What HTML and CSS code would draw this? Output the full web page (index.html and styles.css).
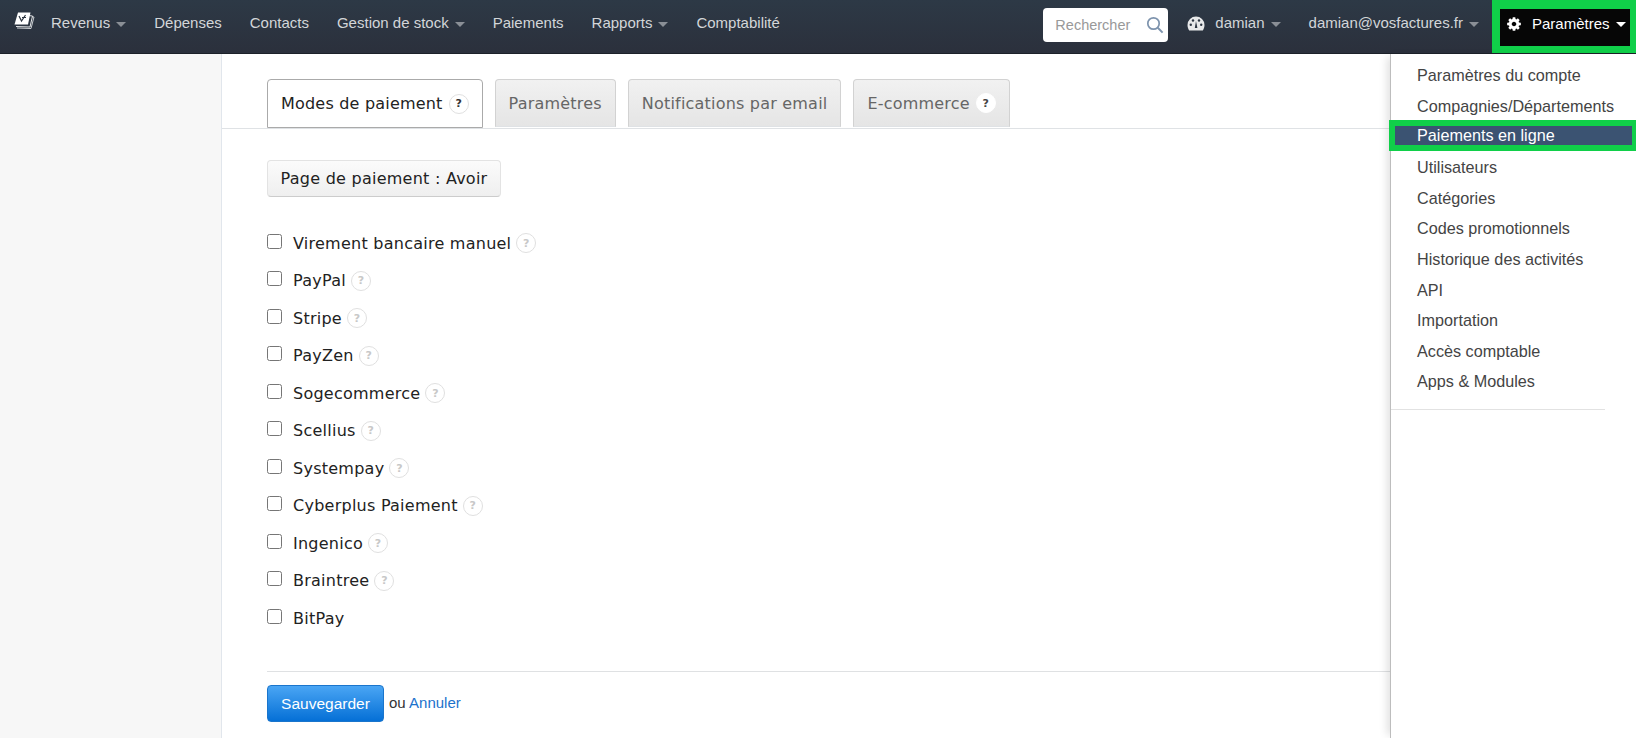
FILE: index.html
```html
<!DOCTYPE html>
<html lang="fr">
<head>
<meta charset="utf-8">
<title>Paiements en ligne</title>
<link rel="stylesheet" href="styles.css">
</head>
<body>
<header class="navbar">
  <svg class="logo" viewBox="0 0 22 20" width="22" height="20" aria-hidden="true">
    <path d="M7.5 3.5 21 5 18 16.5 4 16" fill="none" stroke="#c8ccd0" stroke-width="1"/>
    <path d="M6.5 2.5 19.5 4 17 15 3 14.5" fill="#2c3541" stroke="#e4e6e8" stroke-width="1"/>
    <path d="M5 0.5h12.5L15 12.5H1.5z" fill="#fff"/>
    <path d="M6 4l2.5 5 4-6M9 5.5h4" fill="none" stroke="#2c3541" stroke-width="1.2"/>
  </svg>
  <nav class="nav-main">
    <a class="nav-link">Revenus <i class="caret"></i></a>
    <a class="nav-link">Dépenses</a>
    <a class="nav-link">Contacts</a>
    <a class="nav-link">Gestion de stock <i class="caret"></i></a>
    <a class="nav-link">Paiements</a>
    <a class="nav-link">Rapports <i class="caret"></i></a>
    <a class="nav-link">Comptabilité</a>
  </nav>
  <div class="nav-right">
    <div class="search">
      <span>Rechercher</span>
      <svg viewBox="0 0 18 18" width="18" height="18" aria-hidden="true"><circle cx="7.5" cy="7.5" r="5.7" fill="none" stroke="#7d93ad" stroke-width="1.7"/><path d="M11.8 11.8 16.6 16.6" stroke="#7d93ad" stroke-width="2"/></svg>
    </div>
    <a class="nav-link user">
      <svg viewBox="0 0 18 15" width="18" height="15" aria-hidden="true"><path d="M9 .5a8.5 8.5 0 0 0-8.500 8.500c0 2 .6 3.800 1.700 5.500h13.600c1.100-1.700 1.700-3.500 1.700-5.500A8.500 8.500 0 0 0 9 .5z" fill="#e8e9ea"/><circle cx="3.800" cy="8.800" r="1.200" fill="#2c3541"/><circle cx="6" cy="4.500" r="1.200" fill="#2c3541"/><circle cx="14.200" cy="8.800" r="1.200" fill="#2c3541"/><circle cx="12" cy="4.500" r="1.200" fill="#2c3541"/><path d="M7.800 12 9 5l1.400 7z" fill="#2c3541"/></svg>
      damian <i class="caret"></i>
    </a>
    <a class="nav-link email">damian@vosfactures.fr <i class="caret"></i></a>
    <div class="settings">
      <a class="settings-link">
        <svg viewBox="0 0 1792 1792" width="16" height="16" aria-hidden="true"><path fill="#fff" d="M1152 896q0-106-75-181t-181-75-181 75-75 181 75 181 181 75 181-75 75-181zm512-109v222q0 12-8 23t-20 13l-185 28q-19 54-39 91 35 50 107 138 10 12 10 25t-9 23q-27 37-99 108t-94 71q-12 0-26-9l-138-108q-44 23-91 38-16 136-29 186-7 28-36 28h-222q-14 0-24.500-8.500t-11.500-21.500l-28-184q-49-16-90-37l-141 107q-10 9-25 9-14 0-25-11-126-114-165-168-7-10-7-23 0-12 8-23 15-21 51-66.500t54-70.500q-27-50-41-99l-183-27q-13-2-21-12.500t-8-23.500v-222q0-12 8-23t19-13l186-28q14-46 39-92-40-57-107-138-10-12-10-24 0-10 9-23 26-36 98.500-107.500t94.500-71.500q13 0 26 10l138 107q44-23 91-38 16-136 29-186 7-28 36-28h222q14 0 24.500 8.500t11.500 21.500l28 184q49 16 90 37l142-107q9-9 24-9 13 0 25 10 129 119 165 170 7 8 7 22 0 12-8 23-15 21-51 66.500t-54 70.500q26 50 41 98l183 28q13 2 21 12.500t8 23.500z"/></svg>
        Paramètres <i class="caret white"></i>
      </a>
    </div>
  </div>
</header>

<div class="layout">
  <aside class="sidebar"></aside>
  <main class="content">
    <div class="tabs">
      <a class="tab active">Modes de paiement <span class="help dark">?</span></a>
      <a class="tab">Paramètres</a>
      <a class="tab">Notifications par email</a>
      <a class="tab">E-commerce <span class="help solid">?</span></a>
    </div>
    <div class="panel">
      <button class="btn-page" type="button">Page de paiement : Avoir</button>
      <ul class="methods">
        <li><input type="checkbox"><span>Virement bancaire manuel</span><span class="help">?</span></li>
        <li><input type="checkbox"><span>PayPal</span><span class="help">?</span></li>
        <li><input type="checkbox"><span>Stripe</span><span class="help">?</span></li>
        <li><input type="checkbox"><span>PayZen</span><span class="help">?</span></li>
        <li><input type="checkbox"><span>Sogecommerce</span><span class="help">?</span></li>
        <li><input type="checkbox"><span>Scellius</span><span class="help">?</span></li>
        <li><input type="checkbox"><span>Systempay</span><span class="help">?</span></li>
        <li><input type="checkbox"><span>Cyberplus Paiement</span><span class="help">?</span></li>
        <li><input type="checkbox"><span>Ingenico</span><span class="help">?</span></li>
        <li><input type="checkbox"><span>Braintree</span><span class="help">?</span></li>
        <li><input type="checkbox"><span>BitPay</span></li>
      </ul>
      <div class="actions">
        <button class="btn-save" type="button">Sauvegarder</button>
        <span class="or">ou <a class="cancel">Annuler</a></span>
      </div>
    </div>
  </main>
</div>

<div class="dropdown">
  <a class="menu-item">Paramètres du compte</a>
  <a class="menu-item">Compagnies/Départements</a>
  <a class="menu-item selected"><span>Paiements en ligne</span></a>
  <a class="menu-item">Utilisateurs</a>
  <a class="menu-item">Catégories</a>
  <a class="menu-item">Codes promotionnels</a>
  <a class="menu-item">Historique des activités</a>
  <a class="menu-item">API</a>
  <a class="menu-item">Importation</a>
  <a class="menu-item">Accès comptable</a>
  <a class="menu-item">Apps &amp; Modules</a>
  <div class="menu-divider"></div>
</div>
</body>
</html>
```

FILE: styles.css
```css
* { box-sizing: border-box; }
html, body { height: 100%; }
body {
  margin: 0;
  overflow: hidden;
  background: #fff;
  font-family: "Liberation Sans", Arial, sans-serif;
  font-size: 14px;
  color: #333;
}
a { text-decoration: none; }

.navbar {
  height: 54px;
  display: flex;
  align-items: flex-start;
  background: linear-gradient(#2d3946, #2b303c);
  border-bottom: 1px solid #1c2129;
}
.logo { margin: 12px 0 0 13px; flex: none; }
.nav-main { display: flex; margin-left: 16px; }
.nav-link {
  color: #d3d6d9;
  font-size: 15px;
  line-height: 20px;
  margin-right: 28px;
  white-space: nowrap;
  display: flex;
  align-items: center;
  gap: 6px;
  height: 46px;
}
.nav-link svg { margin-right: 4px; }
.caret {
  display: inline-block;
  width: 0;
  height: 0;
  border-left: 5px solid transparent;
  border-right: 5px solid transparent;
  border-top: 5px solid #8a8f96;
  margin-top: 2px;
}
.caret.white { border-top-color: #fff; }

.nav-right { margin-left: auto; display: flex; align-items: flex-start; }
.search {
  width: 125px;
  height: 34px;
  margin: 8px 19px 0 0;
  background: #fff;
  border-radius: 4px;
  display: flex;
  align-items: center;
  justify-content: space-between;
  padding: 0 4px 0 12px;
  color: #999;
  font-size: 14.5px;
}
.email { margin-right: 13px; }
.user { margin-right: 28px; }

.settings {
  width: 144px;
  height: 53px;
  border: solid #10cf49;
  border-width: 0 6px 7px 8px;
  border-top: 9px solid #10cf49;
  background: #060606;
}
.settings-link {
  display: flex;
  align-items: center;
  gap: 6px;
  height: 29px;
  padding-left: 6px;
  color: #fff;
  font-size: 15px;
  white-space: nowrap;
}
.settings-link svg { margin-right: 4px; }

.layout { display: flex; height: calc(100% - 54px); }
.sidebar {
  width: 222px;
  flex: none;
  background: #f7f7f7;
  border-right: 1px solid #e1e6ec;
}
.content { flex: 1; min-width: 0; font-family: "DejaVu Sans", Verdana, sans-serif; }

.tabs {
  display: flex;
  gap: 12px;
  height: 75px;
  padding: 25px 0 0 45px;
  border-bottom: 1px solid #dfe2e5;
}
.tab {
  height: 48px;
  padding: 0 13px;
  display: flex;
  align-items: center;
  gap: 6px;
  color: #666;
  font-size: 16px;
  letter-spacing: 0.2px;
  white-space: nowrap;
  border: 1px solid #d2d2d2;
  border-bottom-color: #dfe2e5;
  border-radius: 4px 4px 0 0;
  background: linear-gradient(#f1f1f1, #e5e5e5);
}
.tab.active {
  height: 49px;
  color: #222;
  background: #fff;
  border: 1px solid #aaa;
}
.help {
  display: inline-flex;
  align-items: center;
  justify-content: center;
  width: 20px;
  height: 20px;
  flex: none;
  border: 1px solid #e0e0e0;
  border-radius: 50%;
  background: #fff;
  color: #c8c8c8;
  font-family: "DejaVu Sans", sans-serif;
  font-size: 11px;
  font-weight: bold;
  letter-spacing: 0;
}
.help.dark { color: #333; }
.help.solid { color: #444; border-color: #fff; }

.panel { padding: 31px 0 0 45px; }
.btn-page {
  display: block;
  height: 37px;
  width: 234px;
  padding: 0;
  border: 1px solid #e3e3e3;
  border-bottom-color: #ccc;
  border-radius: 4px;
  background: linear-gradient(#fbfbfb, #efefef);
  color: #222;
  font-family: "DejaVu Sans", Verdana, sans-serif;
  font-size: 16px;
  letter-spacing: 0.25px;
}
.methods { list-style: none; margin: 27px 0 0; padding: 0; }
.methods li {
  display: flex;
  align-items: center;
  gap: 5px;
  height: 37.5px;
  padding-top: 1px;
  color: #222;
  font-size: 16px;
  letter-spacing: 0.25px;
}
.methods input {
  width: 15px;
  height: 15px;
  margin: -4px 6px 0 0;
  flex: none;
}
.actions {
  margin-top: 34px;
  padding-top: 13px;
  border-top: 1px solid #dfe1e3;
  display: flex;
  align-items: center;
  gap: 5px;
}
.btn-save {
  width: 117px;
  height: 37px;
  padding: 2px 0 0;
  color: #fff;
  font-family: "Liberation Sans", Arial, sans-serif;
  font-size: 15.5px;
  background: linear-gradient(#4aa5f4, #0570d6);
  border: 1px solid #1a75cc;
  border-radius: 4px;
}
.or { margin-top: -2px; font-family: "Liberation Sans", Arial, sans-serif; font-size: 15px; color: #333; }
.cancel { color: #1c72cc; }

.dropdown {
  position: absolute;
  top: 54px;
  left: 1390px;
  right: 0;
  bottom: 0;
  padding-top: 6px;
  background: #fff;
  border-left: 1px solid #bdbdbd;
  box-shadow: -6px 0 8px -3px rgba(0, 0, 0, 0.12);
}
.menu-item {
  display: block;
  height: 30.6px;
  line-height: 30px;
  padding-left: 26px;
  color: #444;
  font-size: 16.2px;
  white-space: nowrap;
}
.menu-item.selected {
  position: relative;
  height: 31px;
  margin: -1px 0 1px -2px;
  padding: 6px 4px 6px 6px;
  background: #10cf49;
  line-height: 19px;
  color: #fff;
}
.menu-item.selected span {
  display: block;
  height: 19px;
  padding-left: 22px;
  background: #3b5372;
}
.menu-divider {
  width: 214px;
  height: 1px;
  margin-top: 12px;
  background: #e2e2e2;
}
```
